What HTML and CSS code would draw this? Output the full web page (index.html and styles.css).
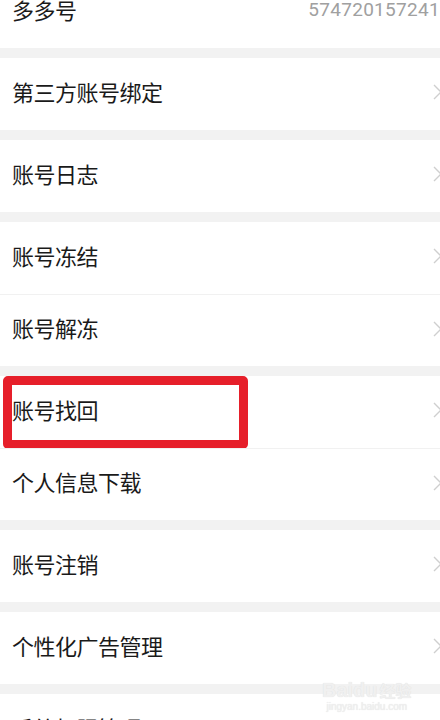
FILE: index.html
```html
<!DOCTYPE html>
<html lang="zh">
<head>
  <meta charset="UTF-8" />
  <meta name="viewport" content="width=device-width, initial-scale=1.0" />
  <title>账号与安全</title>
  <link rel="stylesheet" href="styles.css">
</head>
<body>
  <div class="page">
    <div class="group">
      <div class="row">
        <span class="label">多多号</span>
        <span class="value">574720157241</span>
      </div>
    </div>

    <div class="group">
      <div class="row">
        <span class="label">第三方账号绑定</span>
        <svg class="arrow" viewBox="0 0 7 16"><path d="M1 1 L8 8 L1 15" /></svg>
      </div>
    </div>

    <div class="group">
      <div class="row">
        <span class="label">账号日志</span>
        <svg class="arrow" viewBox="0 0 7 16"><path d="M1 1 L8 8 L1 15" /></svg>
      </div>
    </div>

    <div class="group">
      <div class="row">
        <span class="label">账号冻结</span>
        <svg class="arrow" viewBox="0 0 7 16"><path d="M1 1 L8 8 L1 15" /></svg>
      </div>
      <div class="row">
        <span class="label">账号解冻</span>
        <svg class="arrow" viewBox="0 0 7 16"><path d="M1 1 L8 8 L1 15" /></svg>
      </div>
    </div>

    <div class="group">
      <div class="row">
        <span class="label">账号找回</span>
        <svg class="arrow" viewBox="0 0 7 16"><path d="M1 1 L8 8 L1 15" /></svg>
        <div class="mark"></div>
      </div>
      <div class="row">
        <span class="label">个人信息下载</span>
        <svg class="arrow" viewBox="0 0 7 16"><path d="M1 1 L8 8 L1 15" /></svg>
      </div>
    </div>

    <div class="group">
      <div class="row">
        <span class="label">账号注销</span>
        <svg class="arrow" viewBox="0 0 7 16"><path d="M1 1 L8 8 L1 15" /></svg>
      </div>
    </div>

    <div class="group">
      <div class="row">
        <span class="label">个性化广告管理</span>
        <svg class="arrow" viewBox="0 0 7 16"><path d="M1 1 L8 8 L1 15" /></svg>
      </div>
    </div>

    <div class="group">
      <div class="row">
        <span class="label">系统权限管理</span>
        <svg class="arrow" viewBox="0 0 7 16"><path d="M1 1 L8 8 L1 15" /></svg>
      </div>
    </div>
  </div>

  <!-- 水印 -->
  <div class="watermark">
    <div class="wm-logo">Baidu<span>经验</span></div>
    <div class="wm-url">jingyan.baidu.com</div>
  </div>
</body>
</html>
```

FILE: styles.css
```css
html, body {
  margin: 0;
  padding: 0;
  height: 100%;
  overflow: hidden;
}
body {
  background: #f2f2f2;
  font-family: "Noto Sans CJK SC", "Noto Sans", sans-serif;
  color: #1a1a1a;
  position: relative;
}
.page {
  margin-top: -24px;
  display: flex;
  flex-direction: column;
  gap: 10px;
}
.group {
  background: #fff;
}
.row {
  position: relative;
  height: 72px;
  display: flex;
  align-items: center;
  justify-content: space-between;
  padding-left: 12px;
  box-sizing: border-box;
}
.row + .row {
  border-top: 1px solid #f1f1f1;
}
.label {
  font-size: 22px;
  line-height: 1;
  letter-spacing: -0.5px;
  margin-top: -7px;
}
.value {
  font-family: Roboto, "Noto Sans", sans-serif;
  font-size: 19px;
  color: #a0a0a0;
  letter-spacing: 0.3px;
  margin-top: -5px;
}
.arrow {
  width: 7px;
  height: 16px;
  fill: none;
  stroke: #cfcfcf;
  stroke-width: 1.4;
  overflow: hidden;
  margin-top: -4px;
}
.mark {
  position: absolute;
  left: 3px;
  top: 0;
  width: 245px;
  height: 73px;
  border: 9px solid #e61f2a;
  border-radius: 5px;
  box-sizing: border-box;
}
.watermark {
  position: absolute;
  left: 322px;
  top: 680px;
  color: #f0f0f0;
  text-shadow: 0 0 1px #dcdcdc;
  font-family: "Liberation Sans", sans-serif;
  text-align: center;
}
.wm-logo {
  font-size: 20px;
  font-weight: bold;
  line-height: 20px;
}
.wm-logo span {
  font-family: "Noto Sans CJK SC", sans-serif;
  font-size: 16px;
  margin-left: 2px;
}
.wm-url {
  font-size: 10px;
  line-height: 14px;
}
```
